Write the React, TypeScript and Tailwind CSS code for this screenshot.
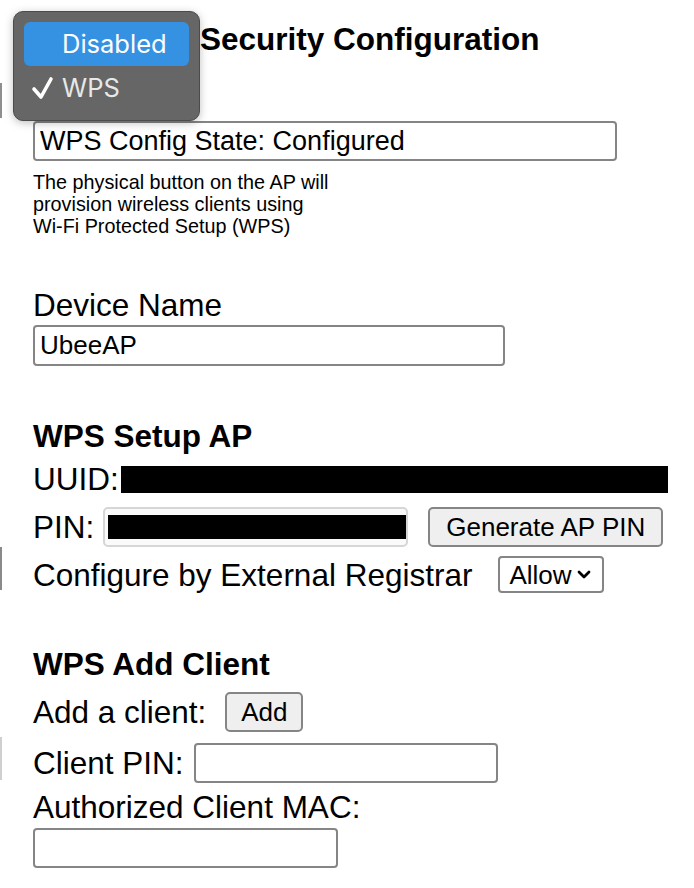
import React from 'react';

function Field({ className = '', value = '' }: { className?: string; value?: string }) {
  return (
    <input
      readOnly
      value={value}
      className={`h-[40px] rounded-[4px] border-2 border-[#858585] bg-white pl-[5px] text-[26px] outline-none ${className}`}
    />
  );
}

function Btn({ label, className = '' }: { label: string; className?: string }) {
  return (
    <button className={`flex h-[40px] items-center justify-center rounded-[5px] border-2 border-[#858585] bg-[#efefef] text-[26px] ${className}`}>
      {label}
    </button>
  );
}

function SelectMenu() {
  return (
    <div className="absolute left-[13px] top-[11px] w-[187px] rounded-[10px] border border-[#4b4b4b] bg-[#666666] p-[10px] font-['Inter',sans-serif] text-[25.5px] shadow-[0_2px_8px_rgba(0,0,0,0.25)]">
      <div className="flex h-[44px] items-center rounded-[6px] bg-[#3592e3] pl-[38px] text-white">Disabled</div>
      <div className="flex h-[44px] items-center text-[#e8e8e8]">
        <svg width="38" height="44" viewBox="0 0 38 44" className="shrink-0">
          <path d="M10 23 L17 31 L27 13" fill="none" stroke="white" strokeWidth="3.6" strokeLinecap="round" strokeLinejoin="round" />
        </svg>
        WPS
      </div>
    </div>
  );
}

export default function App() {
  return (
    <div className="relative min-h-[888px] bg-white pl-[33px] text-black font-['Liberation_Sans',Arial,sans-serif]">
      <h1 className="ml-[167px] pt-[21px] text-[31.5px] font-bold leading-[36px]">Security Configuration</h1>

      <Field className="mt-[64px] block h-[39px] w-[584px] text-[27px]" value="WPS Config State: Configured" />

      <p className="mt-[10px] text-[19.8px] leading-[22px]">
        The physical button on the AP will
        <br />
        provision wireless clients using
        <br />
        Wi-Fi Protected Setup (WPS)
      </p>

      <div className="mt-[50px] text-[31.5px] leading-[36px]">Device Name</div>
      <Field className="mt-[2px] block h-[41px] w-[472px]" value="UbeeAP" />

      <h2 className="mt-[52px] text-[31.5px] font-bold leading-[36px]">WPS Setup AP</h2>

      <div className="mt-[7px] flex h-[36px] items-center text-[31.5px] leading-[36px]">
        <span>UUID:</span>
        <div className="ml-[2px] h-[27px] w-[547px] bg-black" />
      </div>

      <div className="mt-[10px] flex h-[40px] items-center text-[31.5px] leading-[36px]">
        <span>PIN:</span>
        <div className="ml-[9px] flex h-[40px] w-[305px] items-center rounded-[5px] border-2 border-[#d6d6d6] bg-[#fafafa] pl-[3px]">
          <div className="h-[24px] w-[298px] bg-black" />
        </div>
        <Btn label="Generate AP PIN" className="ml-[20px] w-[235px]" />
      </div>

      <div className="mt-[9px] flex h-[37px] items-center text-[31.5px] leading-[36px]">
        <span>Configure by External Registrar</span>
        <div className="ml-[26px] flex h-[37px] w-[106px] items-center rounded-[4px] border-2 border-[#858585] pl-[9px] text-[26px]">
          Allow
          <svg width="14" height="10" viewBox="0 0 14 10" className="ml-[5px]">
            <path d="M2 2 L7 7 L12 2" fill="none" stroke="black" strokeWidth="2.8" strokeLinecap="round" strokeLinejoin="round" />
          </svg>
        </div>
      </div>

      <h2 className="mt-[53px] text-[31.5px] font-bold leading-[36px]">WPS Add Client</h2>

      <div className="mt-[10px] flex h-[40px] items-center text-[31.5px] leading-[36px]">
        <span>Add a client:</span>
        <Btn label="Add" className="ml-[19px] w-[78px]" />
      </div>

      <div className="mt-[11px] flex h-[40px] items-center text-[31.5px] leading-[36px]">
        <span>Client PIN:</span>
        <Field className="ml-[10px] w-[304px]" />
      </div>

      <div className="mt-[6px] text-[31.5px] leading-[36px]">Authorized Client MAC:</div>
      <Field className="mt-[3px] block w-[305px]" />

      <div className="absolute left-0 top-[83px] h-[35px] w-[2px] bg-[#8e8e8e]" />
      <div className="absolute left-0 top-[547px] h-[43px] w-[2px] bg-[#8a8a8a]" />
      <div className="absolute left-0 top-[737px] h-[43px] w-[2px] bg-[#cfcfcf]" />

      <SelectMenu />
    </div>
  );
}
